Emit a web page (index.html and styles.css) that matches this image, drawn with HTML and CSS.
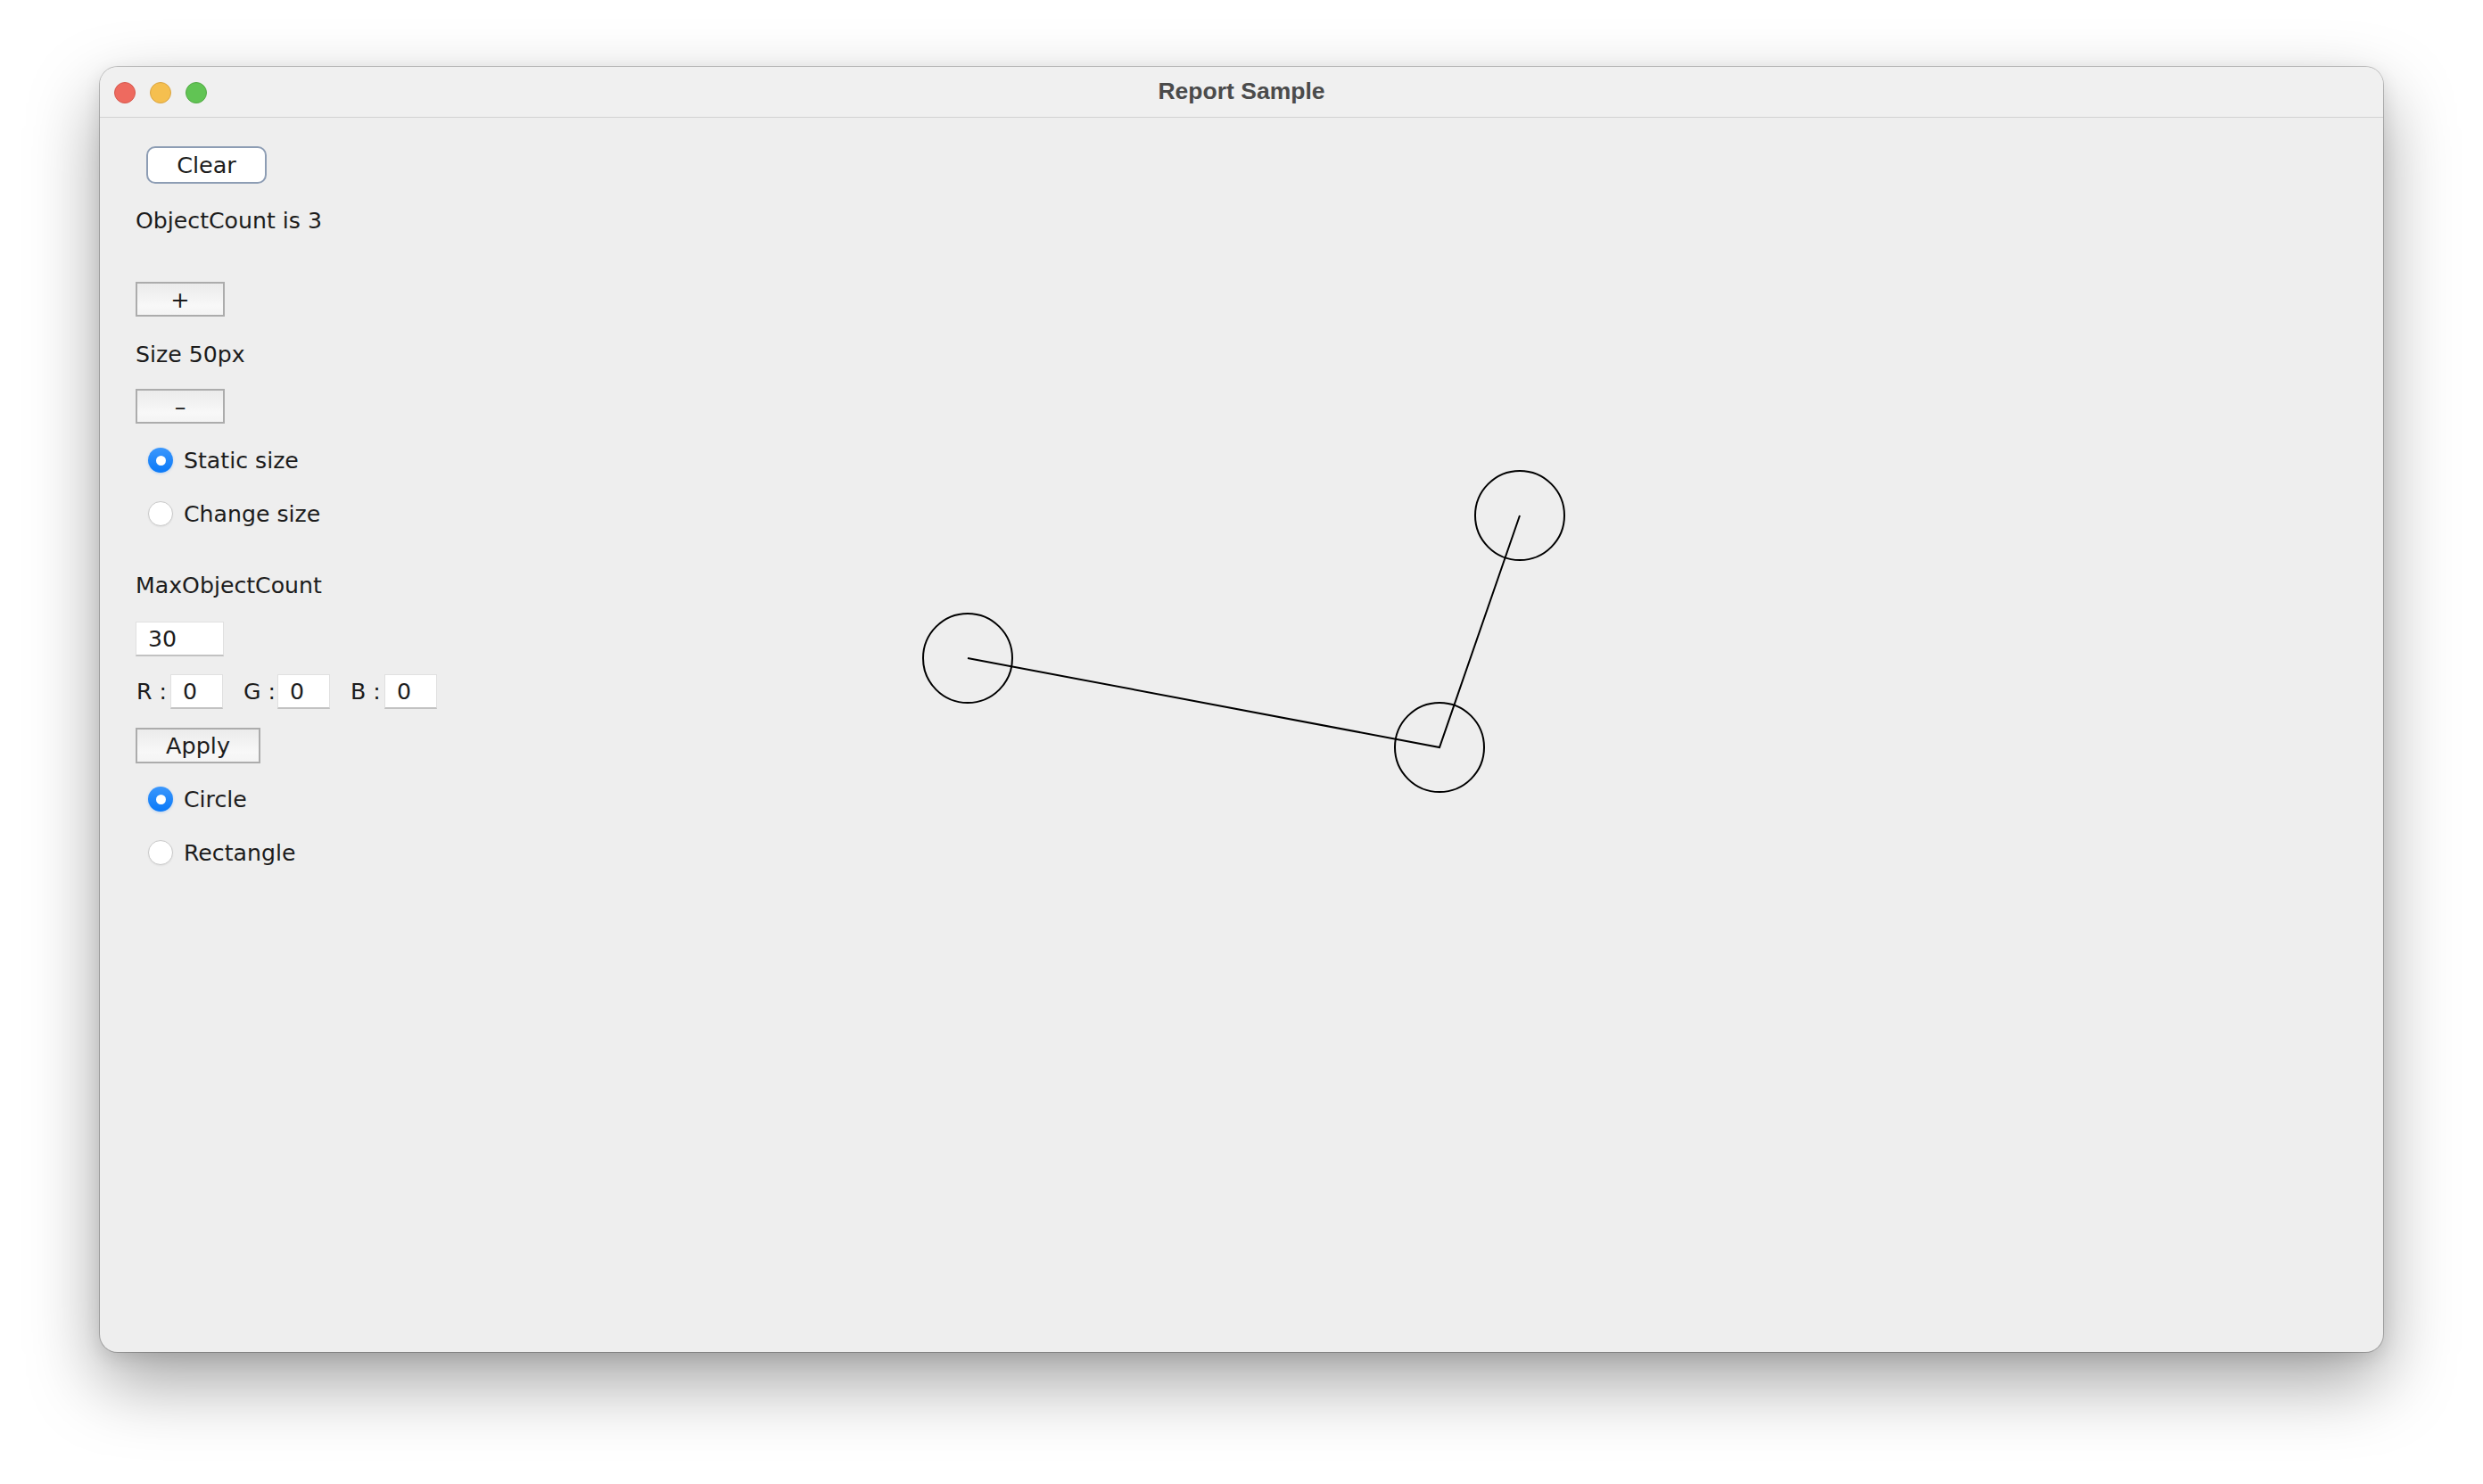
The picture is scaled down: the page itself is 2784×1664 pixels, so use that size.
FILE: index.html
```html
<!DOCTYPE html>
<html>
<head>
<meta charset="utf-8">
<title>Report Sample</title>
<link rel="stylesheet" href="styles.css">
</head>
<body>
<div class="window">
  <div class="titlebar">
    <div class="lights">
      <span class="light red"></span>
      <span class="light yellow"></span>
      <span class="light green"></span>
    </div>
    <div class="title">Report Sample</div>
  </div>
  <div class="content">
    <div class="panel">
      <div class="row-clear"><button class="btn-clear">Clear</button></div>
      <div class="label l-count">ObjectCount is 3</div>
      <button class="btn-square btn-plus">+</button>
      <div class="label l-size">Size 50px</div>
      <button class="btn-square btn-minus">–</button>
      <div class="radio-row r-static"><span class="radio on"></span><span class="radio-text">Static size</span></div>
      <div class="radio-row r-change"><span class="radio"></span><span class="radio-text">Change size</span></div>
      <div class="label l-max">MaxObjectCount</div>
      <div class="field f-max">30</div>
      <div class="rgb-row">
        <div class="rgb-group"><span class="rgb-label">R :</span><span class="field f-rgb">0</span></div>
        <div class="rgb-group"><span class="rgb-label">G :</span><span class="field f-rgb">0</span></div>
        <div class="rgb-group"><span class="rgb-label">B :</span><span class="field f-rgb">0</span></div>
      </div>
      <button class="btn-square btn-apply">Apply</button>
      <div class="radio-row r-circle"><span class="radio on"></span><span class="radio-text">Circle</span></div>
      <div class="radio-row r-rect"><span class="radio"></span><span class="radio-text">Rectangle</span></div>
    </div>
    <div class="canvas">
      <svg class="drawing" width="2160" height="1384" viewBox="0 0 2160 1384" xmlns="http://www.w3.org/2000/svg">
        <g fill="none" stroke="#000" stroke-width="2">
          <circle cx="573" cy="606" r="50"/>
          <circle cx="1102" cy="706" r="50"/>
          <circle cx="1192" cy="446" r="50"/>
          <polyline points="573,606 1102,706 1192,446"/>
        </g>
      </svg>
    </div>
  </div>
</div>
</body>
</html>
```

FILE: styles.css
```css
html, body {
  margin: 0;
  padding: 0;
  background: #ffffff;
}
body {
  width: 2784px;
  height: 1664px;
  overflow: hidden;
  font-family: "DejaVu Sans", "Liberation Sans", sans-serif;
}
.window {
  margin-left: 112px;
  margin-top: 75px;
  width: 2560px;
  height: 1441px;
  border-radius: 20px;
  background: #eeeeee;
  overflow: hidden;
  box-shadow: 0 0 0 1px rgba(0,0,0,0.22), 0 34px 80px rgba(0,0,0,0.36), 0 6px 20px rgba(0,0,0,0.10);
  display: flex;
  flex-direction: column;
}
.titlebar {
  height: 56px;
  flex: none;
  background: #f0f0f0;
  border-bottom: 1px solid #d2d2d2;
  display: flex;
  align-items: center;
  position: relative;
}
.lights {
  display: flex;
  gap: 16px;
  margin-left: 16px;
  margin-top: 1px;
}
.light {
  width: 22px;
  height: 22px;
  border-radius: 50%;
  display: block;
}
.red { background: #ee6a5f; border: 1px solid #d5594e; }
.yellow { background: #f5bf4f; border: 1px solid #d9a442; }
.green { background: #61c454; border: 1px solid #52a945; }
.title {
  position: absolute;
  left: 0;
  right: 0;
  top: 0;
  bottom: 0;
  display: flex;
  align-items: center;
  justify-content: center;
  font-family: "Liberation Sans", Arial, sans-serif;
  font-weight: bold;
  font-size: 26.5px;
  color: #4b4b4b;
  padding-bottom: 2px;
}
.content {
  flex: 1;
  display: flex;
}
.panel {
  width: 400px;
  box-sizing: border-box;
  flex: none;
  display: flex;
  flex-direction: column;
  align-items: flex-start;
  padding-left: 40px;
  font-size: 25.2px;
  color: #1c1c1c;
}
.label {
  height: 30px;
  line-height: 30px;
  white-space: nowrap;
}
.row-clear {
  margin-top: 32px;
  margin-left: 12px;
}
.btn-clear {
  width: 135px;
  height: 42px;
  border: 2px solid #8d9db4;
  border-radius: 10px;
  background: #ffffff;
  font-family: "DejaVu Sans", sans-serif;
  font-size: 25.5px;
  color: #1c1c1c;
  padding: 0;
  line-height: 36px;
  display: block;
}
.l-count { margin-top: 27px; }
.btn-square {
  height: 39px;
  border: 2px solid #acacac;
  border-radius: 0;
  background: linear-gradient(#ebebeb, #f8f8f8 70%, #f4f4f4);
  font-family: "DejaVu Sans", sans-serif;
  font-size: 25.5px;
  color: #1c1c1c;
  padding: 0;
  line-height: 34px;
  display: block;
}
.btn-plus { width: 100px; margin-top: 53px; }
.l-size { margin-top: 28px; }
.btn-minus { width: 100px; margin-top: 23px; }
.radio-row {
  height: 30px;
  line-height: 30px;
  display: flex;
  align-items: center;
  margin-left: 14px;
  white-space: nowrap;
}
.r-static { margin-top: 27px; }
.r-change { margin-top: 30px; }
.r-circle { margin-top: 26px; }
.r-rect { margin-top: 30px; }
.radio {
  width: 28px;
  height: 28px;
  box-sizing: border-box;
  border-radius: 50%;
  background: #ffffff;
  border: 1px solid #c9c9c9;
  box-shadow: 0 1px 2px rgba(0,0,0,0.06);
  margin-bottom: 2px;
  display: flex;
  align-items: center;
  justify-content: center;
}
.radio.on {
  border: none;
  background: linear-gradient(#3b97fc, #0a79f8);
  box-shadow: 0 1px 3px rgba(10,121,248,0.25);
}
.radio.on::after {
  content: "";
  width: 11px;
  height: 11px;
  border-radius: 50%;
  background: #ffffff;
}
.radio-text { margin-left: 12px; }
.l-max { margin-top: 50px; }
.field {
  height: 39px;
  box-sizing: border-box;
  background: #ffffff;
  border: 1px solid #e0e0e0;
  border-bottom: 2px solid #c2c2c2;
  padding-left: 13px;
  line-height: 37px;
}
.f-max { width: 99px; margin-top: 25px; }
.rgb-row {
  margin-top: 20px;
  display: flex;
  gap: 22px;
}
.rgb-group {
  display: flex;
  align-items: center;
}
.rgb-label {
  width: 39px;
  padding-left: 1px;
  box-sizing: border-box;
  white-space: nowrap;
}
.f-rgb { width: 59px; display: block; }
.btn-apply { width: 140px; height: 40px; margin-top: 21px; }
.canvas {
  flex: 1;
  position: relative;
}
.drawing {
  display: block;
}
```
